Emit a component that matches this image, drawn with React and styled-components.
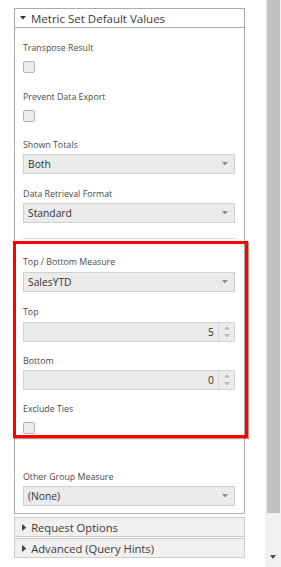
import React from "react"
import styled, { createGlobalStyle } from "styled-components"

const GlobalStyle = createGlobalStyle`
  html, body {
    margin: 0;
    padding: 0;
    background: #fff;
  }
  body {
    font-family: "Open Sans", "Noto Sans", sans-serif;
    color: #333;
  }
`

const Page = styled.div`
  display: flex;
  width: 281px;
  height: 567px;
  overflow: hidden;
  background: #fff;
`

const Content = styled.div`
  width: 265px;
  padding: 8px 0 0 14px;
  box-sizing: border-box;
`

const Panel = styled.div`
  width: 231px;
  box-sizing: border-box;
  border: 1px solid #ababab;
  background: #fff;
`

const PanelHeader = styled.div`
  display: flex;
  align-items: center;
  gap: 5px;
  height: 18px;
  padding-left: 5px;
  border-bottom: 1px solid #ababab;
  font-size: 11.5px;
  color: #3a3a3a;
`

const Body = styled.div`
  display: flex;
  flex-direction: column;
  padding: 13px 9px 7px 8px;
`

const Label = styled.div`
  height: 14px;
  line-height: 14px;
  font-size: 8.8px;
  color: #4a4a4a;
  margin-top: ${p => p.$gap || 0}px;
  white-space: nowrap;
`

const Check = styled.div`
  width: 12px;
  height: 12px;
  box-sizing: border-box;
  margin-top: 6px;
  border: 1px solid #b4b4b4;
  border-radius: 2px;
  background: #ececec;
`

const SelectBox = styled.div`
  display: flex;
  align-items: center;
  justify-content: space-between;
  height: 20px;
  box-sizing: border-box;
  margin-top: ${p => p.$gap || 2}px;
  padding: 0 6px 0 4px;
  border: 1px solid #cfcfcf;
  background: #ebebeb;
  font-size: 10.3px;
  color: #333;
`

const NumberBox = styled.div`
  display: flex;
  height: 20px;
  box-sizing: border-box;
  margin-top: ${p => p.$gap || 2}px;
  border: 1px solid #d4d4d4;
  background: #ebebeb;
  font-size: 10.3px;
  color: #333;
`

const NumberValue = styled.div`
  flex: 1;
  display: flex;
  align-items: center;
  justify-content: flex-end;
  padding-right: 4px;
  border-right: 1px solid #d6d6d6;
`

const Spinner = styled.div`
  width: 15px;
  display: flex;
  flex-direction: column;
  align-items: center;
  justify-content: center;
  gap: 4px;
`

const Divider = styled.div`
  height: 1px;
  margin-top: 15px;
  background: #d9d9d9;
`

const Highlight = styled.div`
  display: flex;
  flex-direction: column;
  margin: 2px -13px 0 -10px;
  padding: 11px 10px 1px 7px;
  border: 3px solid #ff0000;
  box-shadow: 1px 1px 1px rgba(120, 0, 0, 0.45);
`

const CollapsedHeader = styled.div`
  display: flex;
  align-items: center;
  gap: 5px;
  width: 231px;
  height: 20px;
  box-sizing: border-box;
  margin-top: ${p => p.$gap || 1}px;
  padding-left: 7px;
  border: 1px solid #cbcbcb;
  background: #f0f0f0;
  font-size: 11.2px;
  color: #3a3a3a;
`

const Scrollbar = styled.div`
  width: 16px;
  display: flex;
  flex-direction: column;
  align-items: center;
  background: #f1f1f1;
`

const Thumb = styled.div`
  width: 13px;
  height: 513px;
  background: #c1c1c1;
`

const ArrowDown = styled.div`
  margin-top: 42px;
  width: 0;
  height: 0;
  border-left: 3.5px solid transparent;
  border-right: 3.5px solid transparent;
  border-top: 4px solid #505050;
`

const Tri = ({ dir = "down", color = "#333", size = 5 }) => {
  const h = size * 0.6
  const pts =
    dir === "down"
      ? `0,0 ${size},0 ${size / 2},${h}`
      : dir === "up"
      ? `0,${h} ${size},${h} ${size / 2},0`
      : `0,0 ${h},${size / 2} 0,${size}`
  const w = dir === "right" ? h : size
  const hh = dir === "right" ? size : h
  return (
    <svg width={w} height={hh} viewBox={`0 0 ${w} ${hh}`}>
      <polygon points={pts} fill={color} />
    </svg>
  )
}

const Select = ({ value, gap }) => (
  <SelectBox $gap={gap}>
    <span>{value}</span>
    <Tri dir="down" color="#8a8a8a" size={6} />
  </SelectBox>
)

const NumberInput = ({ value, gap }) => (
  <NumberBox $gap={gap}>
    <NumberValue>{value}</NumberValue>
    <Spinner>
      <Tri dir="up" color="#b8b8b8" size={6} />
      <Tri dir="down" color="#b8b8b8" size={6} />
    </Spinner>
  </NumberBox>
)

const App = () => (
  <Page>
    <GlobalStyle />
    <Content>
      <Panel>
        <PanelHeader>
          <Tri dir="down" color="#333" size={6} />
          <span>Metric Set Default Values</span>
        </PanelHeader>
        <Body>
          <Label>Transpose Result</Label>
          <Check />
          <Label $gap={17}>Prevent Data Export</Label>
          <Check />
          <Label $gap={16}>Shown Totals</Label>
          <Select value="Both" />
          <Label $gap={13}>Data Retrieval Format</Label>
          <Select value="Standard" />
          <Divider />
          <Highlight>
            <Label>Top / Bottom Measure</Label>
            <Select value="SalesYTD" gap={3} />
            <Label $gap={13}>Top</Label>
            <NumberInput value="5" gap={3} />
            <Label $gap={12}>Bottom</Label>
            <NumberInput value="0" />
            <Label $gap={12}>Exclude Ties</Label>
            <Check />
          </Highlight>
          <Label $gap={32}>Other Group Measure</Label>
          <Select value="(None)" />
        </Body>
      </Panel>
      <CollapsedHeader $gap={3}>
        <Tri dir="right" color="#444" size={7} />
        <span>Request Options</span>
      </CollapsedHeader>
      <CollapsedHeader>
        <Tri dir="right" color="#444" size={7} />
        <span>Advanced (Query Hints)</span>
      </CollapsedHeader>
      <CollapsedHeader $gap={9} />
    </Content>
    <Scrollbar>
      <Thumb />
      <ArrowDown />
    </Scrollbar>
  </Page>
)

export default App
